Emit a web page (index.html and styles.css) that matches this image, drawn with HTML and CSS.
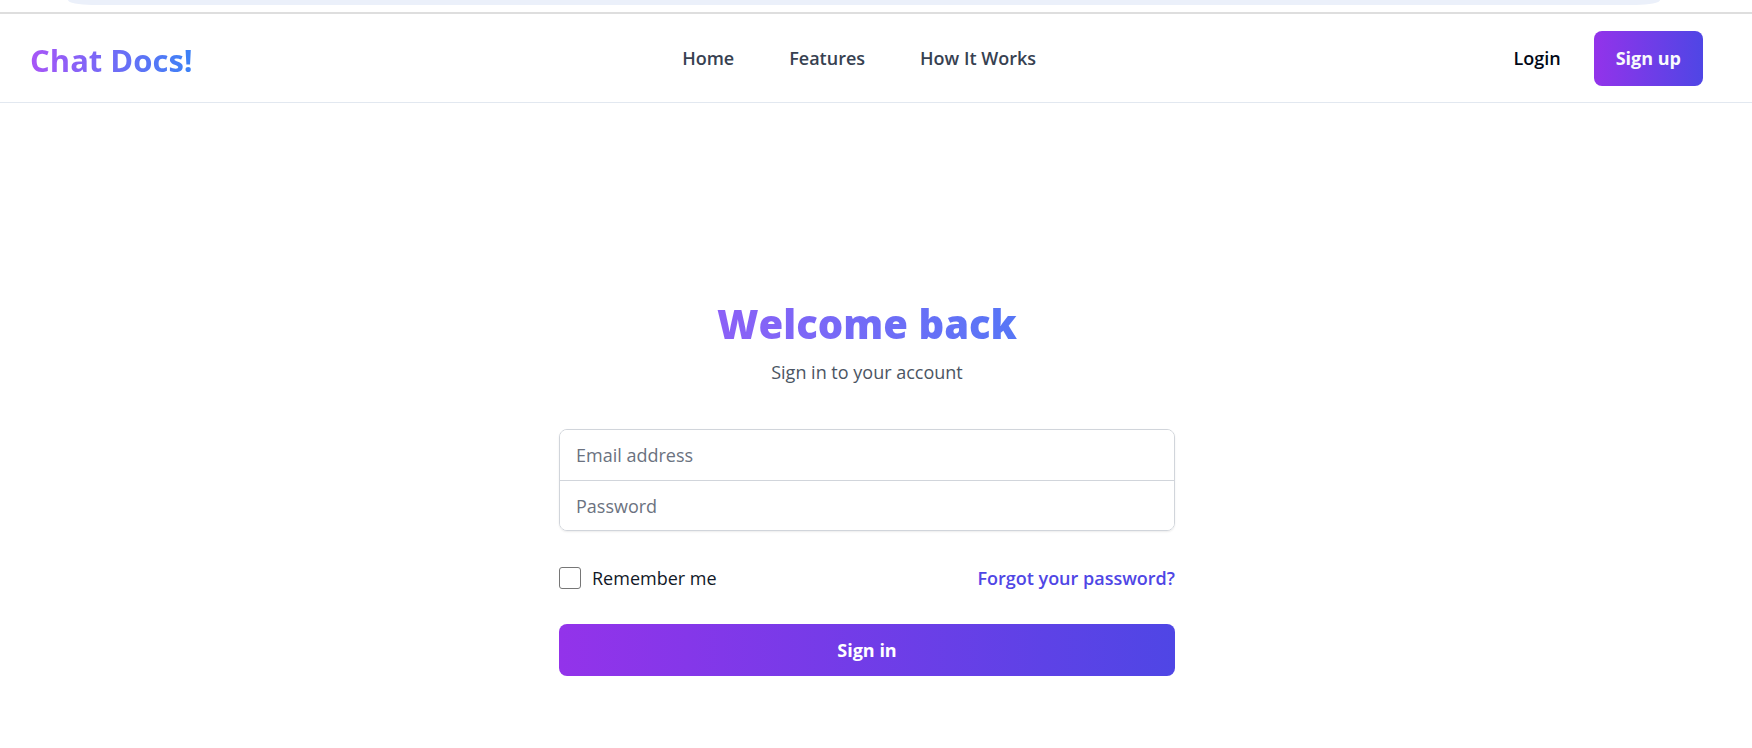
FILE: index.html
```html
<!DOCTYPE html>
<html lang="en">
<head>
<meta charset="utf-8">
<title>Chat Docs! - Sign in</title>
<link rel="stylesheet" href="styles.css">
</head>
<body>
<div class="toolbar"><div class="address"></div></div>
<header class="header">
  <a class="brand" href="#">Chat Docs!</a>
  <nav class="nav">
    <a href="#">Home</a>
    <a href="#">Features</a>
    <a href="#">How It Works</a>
  </nav>
  <div class="actions">
    <a class="login" href="#">Login</a>
    <a class="signup" href="#">Sign up</a>
  </div>
</header>
<main class="main">
  <div class="panel">
    <h1 class="title">Welcome back</h1>
    <p class="subtitle">Sign in to your account</p>
    <form class="form">
      <div class="fields">
        <input type="email" aria-label="Email address" placeholder="Email address">
        <input type="password" aria-label="Password" placeholder="Password">
      </div>
      <div class="options">
        <label class="remember"><input type="checkbox">Remember me</label>
        <a class="forgot" href="#">Forgot your password?</a>
      </div>
      <button class="submit" type="submit">Sign in</button>
    </form>
  </div>
</main>
</body>
</html>
```
FILE: styles.css
```css
* { box-sizing: border-box; }
body {
  margin: 0;
  background: #fff;
  color: #111827;
  font: 18px/28px "Segoe UI", "Open Sans", "Noto Sans", sans-serif;
}
a { color: inherit; text-decoration: none; }
.toolbar {
  height: 14px;
  padding: 0 92px 0 68px;
  border-bottom: 2px solid #dedede;
}
.address {
  height: 5px;
  border-radius: 0 0 24px 24px / 0 0 5px 5px;
  background: #ebf0fa;
}
.header {
  display: flex;
  justify-content: space-between;
  align-items: center;
  height: 89px;
  padding: 0 49px 0 30px;
  border-bottom: 1px solid #e2e8f0;
}
.brand, .title {
  background: linear-gradient(to right, #a855f7, #3b82f6);
  -webkit-background-clip: text;
  background-clip: text;
  color: transparent;
}
.brand {
  margin-right: 12px;
  padding-top: 4px;
  font-size: 31px;
  line-height: 44px;
  font-weight: 700;
}
.nav { display: flex; gap: 55px; color: #374151; font-weight: 600; }
.actions { display: flex; align-items: center; gap: 33px; font-weight: 600; }
.login { color: #020817; }
.signup {
  padding: 13px 22px 14px;
  border-radius: 8px;
  background: linear-gradient(to right, #9333ea, #4f46e5);
  color: #f8fafc;
  font-weight: 700;
}
.main {
  display: flex;
  justify-content: center;
  padding: 193px 18px 0 0;
}
.panel { width: 100%; max-width: 616px; }
.title {
  margin: 0;
  font-size: 40px;
  line-height: 56px;
  font-weight: 800;
  text-align: center;
}
.subtitle { margin: 6px 0 43px; color: #4b5563; text-align: center; }
.fields {
  border: 1px solid #d1d5db;
  border-radius: 8px;
  box-shadow: 0 1px 2px rgba(0, 0, 0, 0.08);
  overflow: hidden;
}
.fields input {
  display: block;
  width: 100%;
  height: 50px;
  padding: 0 16px;
  border: 0;
  background: #fff;
  font: inherit;
}
.fields input + input { border-top: 1px solid #d1d5db; }
.fields input::placeholder { color: #6b7280; }
.options { display: flex; justify-content: space-between; align-items: center; margin: 33px 0 32px; }
.remember { display: flex; align-items: center; gap: 11px; }
.remember input {
  appearance: none;
  width: 22px;
  height: 22px;
  margin: 0;
  border: 1px solid #767676;
  border-radius: 3px;
}
.forgot { color: #4f46e5; font-weight: 600; }
.submit {
  display: block;
  width: 100%;
  height: 52px;
  border: 0;
  border-radius: 8px;
  background: linear-gradient(to right, #9333ea, #4f46e5);
  color: #fff;
  font: inherit;
  font-weight: 700;
}
```
